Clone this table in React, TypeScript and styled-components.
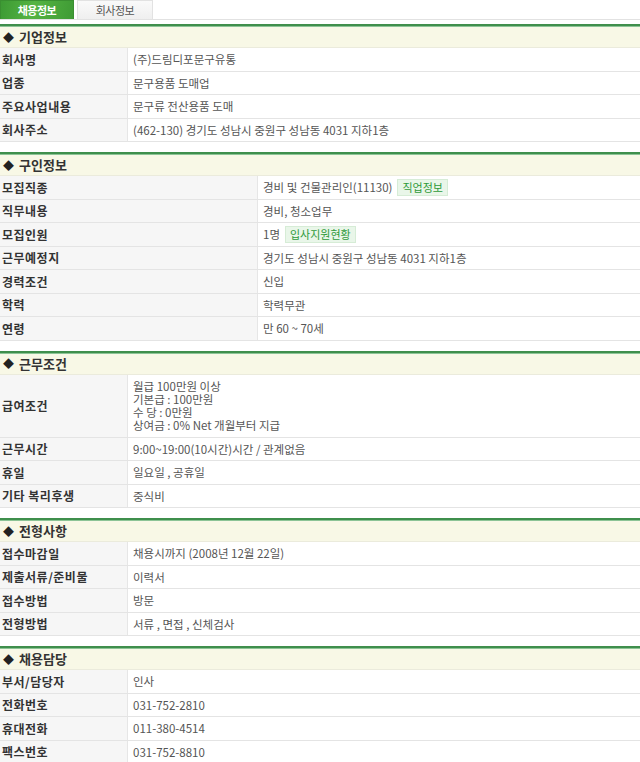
import React from "react";
import styled, { createGlobalStyle } from "styled-components";

const Global = createGlobalStyle`
  html, body { margin: 0; padding: 0; background: #ffffff; }
  body { font-family: "Noto Sans CJK KR", "Noto Sans", sans-serif; }
  * { box-sizing: border-box; }
`;

const Page = styled.div`
  width: 640px;
  overflow: hidden;
`;

const TabBar = styled.div`
  display: flex;
  gap: 3px;
  height: 20px;
  border-bottom: 1px solid #e2e2e2;
`;

const Tab = styled.div<{ $active?: boolean }>`
  width: ${(p) => (p.$active ? 74 : 76)}px;
  height: 19px;
  display: flex;
  align-items: center;
  justify-content: center;
  font-size: 11px;
  letter-spacing: -0.5px;
  font-weight: ${(p) => (p.$active ? 700 : 400)};
  color: ${(p) => (p.$active ? "#ffffff" : "#555555")};
  background: ${(p) =>
    p.$active
      ? "linear-gradient(100deg, #3d9a34 0%, #55b443 45%, #3f9b35 100%)"
      : "linear-gradient(#fafafa, #efefef)"};
  border: 1px solid ${(p) => (p.$active ? "#3a8f31" : "#e2e2e2")};
  border-bottom: none;
`;

const Section = styled.section`
  margin-top: 4px;
  margin-bottom: 10px;
  & + & { margin-top: 0; }
`;

const SectionHead = styled.div`
  height: 24px;
  border-top: 2px solid #3f8f4c;
  box-shadow: inset 0 1px 0 #8cc496;
  background: #f8f8e6;
  border-bottom: 1px solid #ebebdc;
  display: flex;
  align-items: center;
  padding-left: 3px;
  font-size: 13px;
  font-weight: 700;
  color: #333333;
`;

const Diamond = styled.span`
  font-size: 11px;
  margin-right: 5px;
  color: #222;
`;

const Row = styled.div<{ $label: number; $tall?: boolean }>`
  display: grid;
  grid-template-columns: ${(p) => p.$label}px 1fr;
  min-height: ${(p) => (p.$tall ? 63 : 23.5)}px;
  border-bottom: 1px solid #e4e4e4;
`;

const Label = styled.div`
  background: #f6f6f6;
  border-right: 1px solid #e6e6e6;
  display: flex;
  align-items: center;
  padding-left: 2px;
  font-size: 12px;
  font-weight: 700;
  color: #333333;
  letter-spacing: 0.5px;
`;

const Value = styled.div`
  display: flex;
  align-items: center;
  padding-left: 5px;
  font-size: 11.5px;
  color: #555555;
  background: #ffffff;
`;

const MultiValue = styled.div`
  display: flex;
  flex-direction: column;
  justify-content: center;
  padding: 4px 0 4px 5px;
  font-size: 11.5px;
  line-height: 13px;
  color: #555555;
`;

const Badge = styled.span`
  display: inline-flex;
  align-items: center;
  height: 17px;
  margin-left: 5px;
  padding: 0 4px;
  font-size: 11px;
  color: #2f9a3a;
  background: #e9f6e9;
  border: 1px solid #d6ecd6;
`;

type Item = { label: string; value: React.ReactNode; tall?: boolean };

const InfoSection: React.FC<{ title: string; labelWidth: number; items: Item[] }> = ({
  title,
  labelWidth,
  items,
}) => (
  <Section>
    <SectionHead>
      <Diamond>◆</Diamond>
      {title}
    </SectionHead>
    {items.map((it) => (
      <Row key={it.label} $label={labelWidth} $tall={it.tall}>
        <Label>{it.label}</Label>
        {it.tall ? <MultiValue>{it.value}</MultiValue> : <Value>{it.value}</Value>}
      </Row>
    ))}
  </Section>
);

export default function App() {
  return (
    <Page>
      <Global />
      <TabBar>
        <Tab $active>채용정보</Tab>
        <Tab>회사정보</Tab>
      </TabBar>
      <InfoSection
        title="기업정보"
        labelWidth={128}
        items={[
          { label: "회사명", value: "(주)드림디포문구유통" },
          { label: "업종", value: "문구용품 도매업" },
          { label: "주요사업내용", value: "문구류 전산용품 도매" },
          { label: "회사주소", value: "(462-130) 경기도 성남시 중원구 성남동 4031 지하1층" },
        ]}
      />
      <InfoSection
        title="구인정보"
        labelWidth={258}
        items={[
          {
            label: "모집직종",
            value: (
              <>
                경비 및 건물관리인(11130)<Badge>직업정보</Badge>
              </>
            ),
          },
          { label: "직무내용", value: "경비, 청소업무" },
          {
            label: "모집인원",
            value: (
              <>
                1명<Badge>입사지원현황</Badge>
              </>
            ),
          },
          { label: "근무예정지", value: "경기도 성남시 중원구 성남동 4031 지하1층" },
          { label: "경력조건", value: "신입" },
          { label: "학력", value: "학력무관" },
          { label: "연령", value: "만 60 ~ 70세" },
        ]}
      />
      <InfoSection
        title="근무조건"
        labelWidth={128}
        items={[
          {
            label: "급여조건",
            tall: true,
            value: (
              <>
                <span>월급 100만원 이상</span>
                <span>기본급 : 100만원</span>
                <span>수 당 : 0만원</span>
                <span>상여금 : 0% Net 개월부터 지급</span>
              </>
            ),
          },
          { label: "근무시간", value: "9:00~19:00(10시간)시간 / 관계없음" },
          { label: "휴일", value: "일요일 , 공휴일" },
          { label: "기타 복리후생", value: "중식비" },
        ]}
      />
      <InfoSection
        title="전형사항"
        labelWidth={128}
        items={[
          { label: "접수마감일", value: "채용시까지 (2008년 12월 22일)" },
          { label: "제출서류/준비물", value: "이력서" },
          { label: "접수방법", value: "방문" },
          { label: "전형방법", value: "서류 , 면접 , 신체검사" },
        ]}
      />
      <InfoSection
        title="채용담당"
        labelWidth={128}
        items={[
          { label: "부서/담당자", value: "인사" },
          { label: "전화번호", value: "031-752-2810" },
          { label: "휴대전화", value: "011-380-4514" },
          { label: "팩스번호", value: "031-752-8810" },
        ]}
      />
    </Page>
  );
}
